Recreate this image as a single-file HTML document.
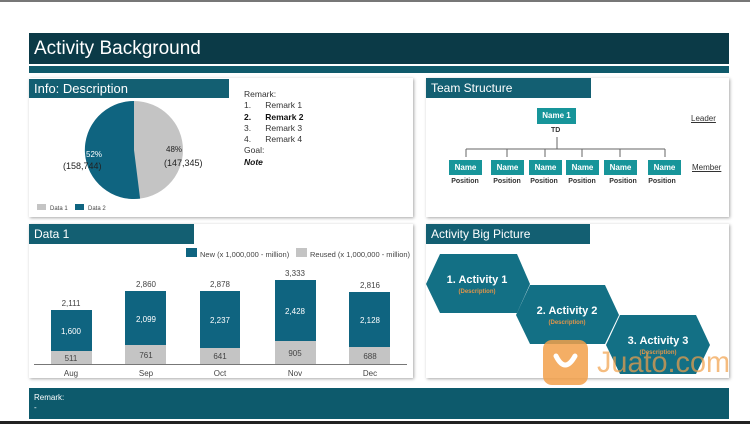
<!DOCTYPE html>
<html><head><meta charset="utf-8"><style>
*{margin:0;padding:0;box-sizing:border-box}
body{width:750px;height:424px;background:#fff;position:relative;overflow:hidden;font-family:"Liberation Sans",sans-serif}
.a{position:absolute}
.card{position:absolute;background:#fff;box-shadow:1px 1px 3px rgba(0,0,0,.35)}
.hd{position:absolute;background:#135f72;color:#fff;font-size:13px;padding-left:5px;line-height:20px}
.nm{position:absolute;background:#17959a;color:#fff;font-size:8px;font-weight:bold;text-align:center;line-height:15px;width:33px;height:15px}
.ps{position:absolute;font-size:7px;font-weight:bold;color:#333;width:40px;text-align:center}
</style></head><body>
<div class="a" style="left:0;top:0;width:750px;height:2px;background:#777"></div>
<div class="a" style="left:29px;top:33px;width:700px;height:31px;background:#0b3a47;color:#fff;font-size:19px;line-height:32px;padding-left:5px">Activity Background</div>
<div class="a" style="left:29px;top:66px;width:700px;height:7px;background:#0f5a6b"></div>

<div class="card" style="left:29px;top:78px;width:384px;height:139px"></div>
<div class="hd" style="left:29px;top:79px;width:200px;height:19px">Info: Description</div>
<svg class="a" style="left:0;top:0" width="420" height="220">
<circle cx="134" cy="150" r="49" fill="#c4c4c4"/>
<path d="M134 150 L134 101 A49 49 0 1 0 140.1 198.6 Z" fill="#0f6480"/>
<text x="86" y="157" font-size="8" fill="#fff" font-family="Liberation Sans">52%</text>
<text x="63" y="169" font-size="9" fill="#222" font-family="Liberation Sans">(158,744)</text>
<text x="166" y="152" font-size="8" fill="#222" font-family="Liberation Sans">48%</text>
<text x="164" y="166" font-size="9" fill="#222" font-family="Liberation Sans">(147,345)</text>
<rect x="37" y="204" width="9" height="6" fill="#c4c4c4"/><text x="50" y="210" font-size="6" fill="#444" font-family="Liberation Sans">Data 1</text>
<rect x="75" y="204" width="9" height="6" fill="#0f6480"/><text x="88" y="210" font-size="6" fill="#444" font-family="Liberation Sans">Data 2</text>
</svg>
<div class="a" style="left:244px;top:89px;font-size:8.5px;line-height:11.3px;color:#333">
Remark:<br>1.&nbsp;&nbsp;&nbsp;&nbsp;&nbsp;&nbsp;Remark 1<br><b style="color:#111">2.&nbsp;&nbsp;&nbsp;&nbsp;&nbsp;&nbsp;Remark 2</b><br>3.&nbsp;&nbsp;&nbsp;&nbsp;&nbsp;&nbsp;Remark 3<br>4.&nbsp;&nbsp;&nbsp;&nbsp;&nbsp;&nbsp;Remark 4<br>Goal:<br><b><i style="color:#111">Note</i></b></div>

<div class="card" style="left:426px;top:78px;width:303px;height:139px"></div>
<div class="hd" style="left:426px;top:78px;width:165px;height:20px;line-height:20px;font-size:12px">Team Structure</div>
<div class="nm" style="left:537px;top:108px;width:39px;height:16px;line-height:16px">Name 1</div>
<div class="a" style="left:551px;top:127px;font-size:7px;font-weight:bold;color:#333">TD</div>
<svg class="a" style="left:420px;top:130px" width="260" height="30"><g stroke="#666" fill="none"><path d="M137 7V19M46 19H245"/><path d="M46 19V27M87 19V27M125 19V27M162 19V27M200 19V27M245 19V27"/></g></svg>
<div class="nm" style="left:449px;top:160px">Name</div>
<div class="nm" style="left:491px;top:160px">Name</div>
<div class="nm" style="left:529px;top:160px">Name</div>
<div class="nm" style="left:566px;top:160px">Name</div>
<div class="nm" style="left:604px;top:160px">Name</div>
<div class="nm" style="left:648px;top:160px">Name</div>
<div class="ps" style="left:445px;top:178px">Position</div>
<div class="ps" style="left:487px;top:178px">Position</div>
<div class="ps" style="left:524px;top:178px">Position</div>
<div class="ps" style="left:562px;top:178px">Position</div>
<div class="ps" style="left:603px;top:178px">Position</div>
<div class="ps" style="left:642px;top:178px">Position</div>
<div class="a" style="left:691px;top:114px;font-size:8px;text-decoration:underline;color:#333">Leader</div>
<div class="a" style="left:692px;top:163px;font-size:8px;text-decoration:underline;color:#333">Member</div>

<div class="card" style="left:29px;top:224px;width:384px;height:154px"></div>
<div class="hd" style="left:29px;top:224px;width:165px;height:20px;font-size:12px">Data 1</div>
<svg class="a" style="left:0;top:220px" width="420" height="170" font-family="Liberation Sans">
<rect x="186" y="28" width="11" height="9" fill="#0f6480"/><text x="200" y="37" font-size="7.5" fill="#444">New (x 1,000,000 - million)</text>
<rect x="296" y="28" width="11" height="9" fill="#c4c4c4"/><text x="310" y="37" font-size="7.5" fill="#444">Reused (x 1,000,000 - million)</text>
<g font-size="8" text-anchor="middle">
<rect x="51" y="90" width="41" height="41" fill="#0f6480"/><rect x="51" y="131" width="41" height="13" fill="#c4c4c4"/>
<text x="71" y="86" fill="#444">2,111</text><text x="71" y="114" fill="#fff">1,600</text><text x="71" y="141" fill="#444">511</text><text x="71" y="156" fill="#444">Aug</text>
<rect x="125" y="71" width="41" height="54" fill="#0f6480"/><rect x="125" y="125" width="41" height="19" fill="#c4c4c4"/>
<text x="146" y="67" fill="#444">2,860</text><text x="146" y="102" fill="#fff">2,099</text><text x="146" y="138" fill="#444">761</text><text x="146" y="156" fill="#444">Sep</text>
<rect x="200" y="71" width="40" height="57" fill="#0f6480"/><rect x="200" y="128" width="40" height="16" fill="#c4c4c4"/>
<text x="220" y="67" fill="#444">2,878</text><text x="220" y="103" fill="#fff">2,237</text><text x="220" y="139" fill="#444">641</text><text x="220" y="156" fill="#444">Oct</text>
<rect x="275" y="60" width="41" height="61" fill="#0f6480"/><rect x="275" y="121" width="41" height="23" fill="#c4c4c4"/>
<text x="295" y="56" fill="#444">3,333</text><text x="295" y="94" fill="#fff">2,428</text><text x="295" y="136" fill="#444">905</text><text x="295" y="156" fill="#444">Nov</text>
<rect x="349" y="72" width="41" height="55" fill="#0f6480"/><rect x="349" y="127" width="41" height="17" fill="#c4c4c4"/>
<text x="370" y="68" fill="#444">2,816</text><text x="370" y="103" fill="#fff">2,128</text><text x="370" y="139" fill="#444">688</text><text x="370" y="156" fill="#444">Dec</text>
</g>
<line x1="34" y1="144.5" x2="407" y2="144.5" stroke="#777"/>
</svg>

<div class="card" style="left:426px;top:224px;width:303px;height:154px"></div>
<div class="hd" style="left:426px;top:224px;width:164px;height:20px;font-size:12px">Activity Big Picture</div>
<svg class="a" style="left:0;top:0" width="750" height="424" font-family="Liberation Sans">
<g fill="#137085">
<polygon points="426,284 440,254 517,254 530,284 517,313 440,313"/>
<polygon points="516,315 530,285 605,285 619,315 605,344 530,344"/>
<polygon points="606,345 620,315 696,315 710,345 696,374 620,374"/>
</g>
<g text-anchor="middle" font-weight="bold">
<text x="477" y="283" font-size="11" fill="#fff">1. Activity 1</text><text x="477" y="293" font-size="6" fill="#e0954a">(Description)</text>
<text x="567" y="314" font-size="11" fill="#fff">2. Activity 2</text><text x="567" y="324" font-size="6" fill="#e0954a">(Description)</text>
<text x="658" y="344" font-size="11" fill="#fff">3. Activity 3</text><text x="658" y="354" font-size="6" fill="#e0954a">(Description)</text>
</g>
<rect x="543" y="340" width="45" height="45" rx="9" fill="#f2a04a" opacity=".85"/>
<path d="M556 356 Q565 374 575 356" stroke="#fff" stroke-width="5" fill="none" stroke-linecap="round"/>
<text x="597" y="372" font-size="30" fill="#f2a04a" opacity=".7" textLength="133" lengthAdjust="spacingAndGlyphs">Juato.com</text>
</svg>

<div class="a" style="left:29px;top:388px;width:700px;height:31px;background:#0d5a6c;color:#fff;font-size:8px;padding:5px 0 0 5px;line-height:10px">Remark:<br>-</div>
<div class="a" style="left:0;top:421px;width:750px;height:3px;background:#222"></div>
</body></html>
